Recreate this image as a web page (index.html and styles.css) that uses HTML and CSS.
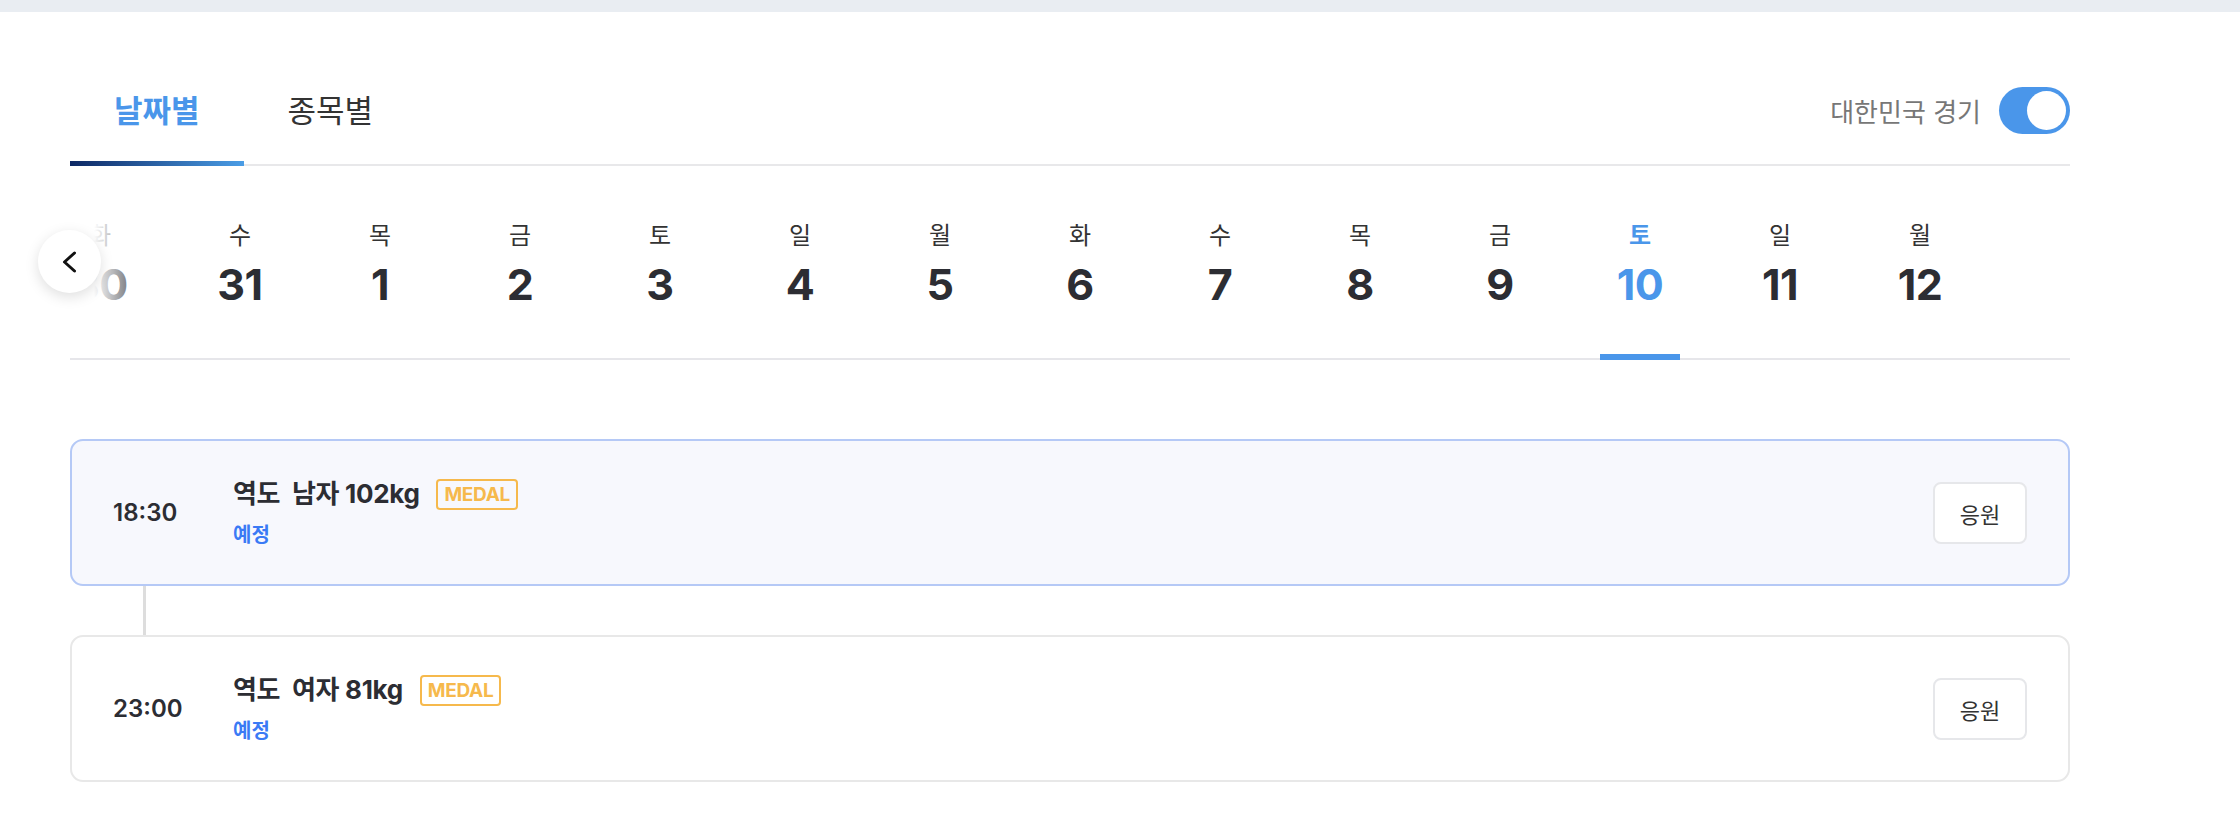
FILE: index.html
```html
<!DOCTYPE html>
<html lang="ko">
<head>
  <meta charset="UTF-8">
  <meta name="viewport" content="width=device-width, initial-scale=1.0">
  <title>경기 일정</title>
  <link rel="stylesheet" href="styles.css">
</head>
<body>
  <div class="topbar"></div>

  <main class="schedule">
    <div class="schedule-head">
      <nav class="tabs">
        <button class="tab tab-active">날짜별</button>
        <button class="tab">종목별</button>
      </nav>
      <label class="korea-filter">
        <span>대한민국 경기</span>
        <span class="switch switch-on"><span class="switch-knob"></span></span>
      </label>
    </div>

    <div class="date-strip">
      <div class="date-viewport">
        <ul class="date-list">
          <li class="date-item"><span class="date-weekday">화</span><span class="date-day">30</span></li>
          <li class="date-item"><span class="date-weekday">수</span><span class="date-day">31</span></li>
          <li class="date-item"><span class="date-weekday">목</span><span class="date-day">1</span></li>
          <li class="date-item"><span class="date-weekday">금</span><span class="date-day">2</span></li>
          <li class="date-item"><span class="date-weekday">토</span><span class="date-day">3</span></li>
          <li class="date-item"><span class="date-weekday">일</span><span class="date-day">4</span></li>
          <li class="date-item"><span class="date-weekday">월</span><span class="date-day">5</span></li>
          <li class="date-item"><span class="date-weekday">화</span><span class="date-day">6</span></li>
          <li class="date-item"><span class="date-weekday">수</span><span class="date-day">7</span></li>
          <li class="date-item"><span class="date-weekday">목</span><span class="date-day">8</span></li>
          <li class="date-item"><span class="date-weekday">금</span><span class="date-day">9</span></li>
          <li class="date-item date-active"><span class="date-weekday">토</span><span class="date-day">10</span></li>
          <li class="date-item"><span class="date-weekday">일</span><span class="date-day">11</span></li>
          <li class="date-item"><span class="date-weekday">월</span><span class="date-day">12</span></li>
        </ul>
        <div class="date-fade"></div>
      </div>
      <button class="date-prev" aria-label="이전">
        <svg width="28" height="28" viewBox="0 0 28 28" fill="none">
          <path d="M18.5 5 L8.5 14 L18.5 23" stroke="#111" stroke-width="3" stroke-linecap="round" stroke-linejoin="round"/>
        </svg>
      </button>
    </div>

    <ul class="match-list">
      <li class="match match-next">
        <div class="match-time">18:30</div>
        <div class="match-info">
          <div class="match-title">역도&nbsp; 남자 102kg <span class="medal">MEDAL</span></div>
          <div class="match-status">예정</div>
        </div>
        <button class="cheer">응원</button>
      </li>
      <li class="match-connector"></li>
      <li class="match">
        <div class="match-time">23:00</div>
        <div class="match-info">
          <div class="match-title">역도&nbsp; 여자 81kg <span class="medal">MEDAL</span></div>
          <div class="match-status">예정</div>
        </div>
        <button class="cheer">응원</button>
      </li>
    </ul>
  </main>
</body>
</html>
```

FILE: styles.css
```css
body {
  margin: 0;
  font-family: Inter, "Noto Sans CJK KR", sans-serif;
  color: #2c2d33;
  background-color: #fff;
}

ul {
  list-style-type: none;
  margin: 0;
  padding: 0;
}

button {
  font-family: inherit;
  cursor: pointer;
}

.topbar {
  height: 12px;
  background-color: #e9edf2;
}

.schedule {
  width: 2000px;
  margin-left: 70px;
  padding-top: 79px;
}

/* tabs + filter */
.schedule-head {
  display: flex;
  justify-content: space-between;
  border-bottom: 2px solid #e8e8ea;
}

.tabs {
  display: flex;
}

.tab {
  position: relative;
  padding: 0 44px 33px;
  border: none;
  background: none;
  font-size: 31px;
  line-height: 40px;
  color: #333;
}

.tab-active {
  font-weight: 700;
  color: #4a96ea;
}

.tab-active::after {
  content: "";
  position: absolute;
  left: 0;
  right: 0;
  bottom: -2px;
  height: 5px;
  background: linear-gradient(90deg, #0d2864, #4a9de6);
}

.korea-filter {
  display: flex;
  align-items: center;
  gap: 18px;
  margin-top: -4px;
  padding-bottom: 30px;
  font-size: 26px;
  color: #777;
}

.switch {
  display: flex;
  justify-content: flex-start;
  box-sizing: border-box;
  width: 71px;
  height: 47px;
  padding: 4px;
  border-radius: 24px;
  background-color: #ccc;
}

.switch-on {
  justify-content: flex-end;
  background-color: #4a96ea;
}

.switch-knob {
  width: 39px;
  height: 39px;
  border-radius: 50%;
  background-color: #fff;
}

/* date strip */
.date-strip {
  position: relative;
}

.date-viewport {
  position: relative;
  overflow: hidden;
  box-shadow: inset 0 -2px 0 #e6e6ea;
}

.date-list {
  display: flex;
  margin-left: -40px;
}

.date-item {
  position: relative;
  flex: none;
  display: flex;
  flex-direction: column;
  align-items: center;
  width: 140px;
  padding: 55px 0 50px;
}

.date-weekday {
  font-size: 24px;
  line-height: 30px;
  color: #333;
}

.date-day {
  margin-top: 7px;
  font-size: 43px;
  line-height: 52px;
  font-weight: 700;
  letter-spacing: -0.5px;
  color: #2c2d33;
}

.date-active .date-weekday,
.date-active .date-day {
  font-weight: 700;
  color: #4a96ea;
}

.date-active::after {
  content: "";
  position: absolute;
  left: 30px;
  right: 30px;
  bottom: 0;
  height: 6px;
  background-color: #4a96ea;
}

.date-fade {
  position: absolute;
  left: 0;
  top: 0;
  bottom: 2px;
  width: 80px;
  background: linear-gradient(90deg, #fff 30%, rgba(255, 255, 255, 0));
}

.date-prev {
  position: absolute;
  left: -32px;
  top: 64px;
  display: flex;
  align-items: center;
  justify-content: center;
  width: 63px;
  height: 63px;
  padding: 0;
  border: none;
  border-radius: 50%;
  background-color: #fff;
  box-shadow: 0 4px 14px rgba(0, 0, 0, 0.13);
}

/* matches */
.match-list {
  margin-top: 79px;
}

.match {
  display: flex;
  align-items: center;
  box-sizing: border-box;
  min-height: 147px;
  padding: 0 41px;
  border: 2px solid #e8e8e8;
  border-radius: 13px;
  background-color: #fff;
}

.match-next {
  border-color: #b5c9f6;
  background-color: #f7f8fd;
}

.match-connector {
  width: 3px;
  height: 49px;
  margin-left: 73px;
  background-color: #ddd;
}

.match-time {
  width: 120px;
  flex: none;
  font-size: 24px;
  font-weight: 600;
}

.match-info {
  flex: 1;
}

.match-title {
  display: flex;
  align-items: center;
  font-size: 26px;
  line-height: 36px;
  font-weight: 700;
  letter-spacing: -0.3px;
  white-space: pre;
}

.medal {
  margin-left: 11px;
  padding: 0 6px;
  border: 2px solid #f6b94c;
  border-radius: 4px;
  font-size: 19px;
  line-height: 27px;
  font-weight: 700;
  letter-spacing: -0.3px;
  color: #f6b94c;
}

.match-status {
  margin-top: 9px;
  font-size: 20px;
  line-height: 28px;
  font-weight: 600;
  color: #3a7af5;
}

.cheer {
  width: 94px;
  height: 62px;
  border: 2px solid #e6e7ea;
  border-radius: 8px;
  background-color: #fff;
  font-size: 22px;
  color: #333;
}
```
